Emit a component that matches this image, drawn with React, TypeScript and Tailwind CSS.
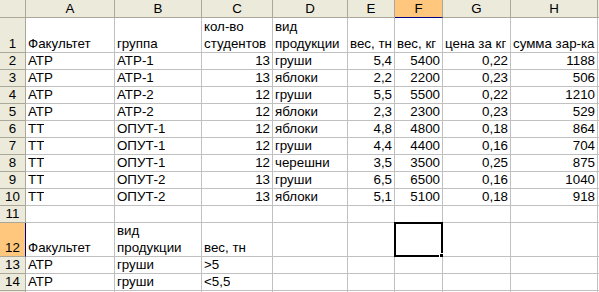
import React from "react";

type Cell = { v?: string; right?: boolean };

const cols = ["A", "B", "C", "D", "E", "F", "G", "H"];
const widths = [89, 87, 71, 75, 47, 48, 68, 87];

const t = (v: string): Cell => ({ v });
const n = (v: string): Cell => ({ v, right: true });
const e: Cell = {};

const rows: { h: number; cells: Cell[] }[] = [
  {
    h: 35,
    cells: [t("Факультет"), t("группа"), t("кол-во студентов"), t("вид продукции"), t("вес, тн"), t("вес, кг"), t("цена за кг"), t("сумма зар-ка")],
  },
  { h: 17, cells: [t("АТР"), t("АТР-1"), n("13"), t("груши"), n("5,4"), n("5400"), n("0,22"), n("1188")] },
  { h: 17, cells: [t("АТР"), t("АТР-1"), n("13"), t("яблоки"), n("2,2"), n("2200"), n("0,23"), n("506")] },
  { h: 17, cells: [t("АТР"), t("АТР-2"), n("12"), t("груши"), n("5,5"), n("5500"), n("0,22"), n("1210")] },
  { h: 17, cells: [t("АТР"), t("АТР-2"), n("12"), t("яблоки"), n("2,3"), n("2300"), n("0,23"), n("529")] },
  { h: 17, cells: [t("ТТ"), t("ОПУТ-1"), n("12"), t("яблоки"), n("4,8"), n("4800"), n("0,18"), n("864")] },
  { h: 17, cells: [t("ТТ"), t("ОПУТ-1"), n("12"), t("груши"), n("4,4"), n("4400"), n("0,16"), n("704")] },
  { h: 17, cells: [t("ТТ"), t("ОПУТ-1"), n("12"), t("черешни"), n("3,5"), n("3500"), n("0,25"), n("875")] },
  { h: 17, cells: [t("ТТ"), t("ОПУТ-2"), n("13"), t("груши"), n("6,5"), n("6500"), n("0,16"), n("1040")] },
  { h: 17, cells: [t("ТТ"), t("ОПУТ-2"), n("13"), t("яблоки"), n("5,1"), n("5100"), n("0,18"), n("918")] },
  { h: 17, cells: [e, e, e, e, e, e, e, e] },
  { h: 34, cells: [t("Факультет"), t("вид продукции"), t("вес, тн"), e, e, e, e, e] },
  { h: 17, cells: [t("АТР"), t("груши"), t(">5"), e, e, e, e, e] },
  { h: 17, cells: [t("АТР"), t("груши"), t("<5,5"), e, e, e, e, e] },
  { h: 17, cells: [e, e, e, e, e, e, e, e] },
];

const activeRow = 12;
const activeCol = 5;

export default function App() {
  return (
    <div
      className="w-[599px] h-[292px] overflow-hidden bg-white text-[13.33px] leading-[17px] text-black"
      style={{ fontFamily: '"Liberation Sans", Arial, sans-serif' }}
    >
      <div className="flex h-[18px]">
        <div className="w-[26px] shrink-0 bg-[#ebeadb] border-r border-b border-[#aca899]" />
        {cols.map((c, i) => (
          <div
            key={c}
            style={{ width: widths[i] }}
            className={
              i === activeCol
                ? "shrink-0 flex items-center justify-center bg-[#ffc77d] border-r border-[#aca899] border-b border-b-[#000080]"
                : "shrink-0 flex items-center justify-center bg-[#ebeadb] border-r border-b border-[#aca899]"
            }
          >
            {c}
          </div>
        ))}
        <div className="flex-1 bg-[#ebeadb] border-b border-[#aca899]" />
      </div>
      {rows.map((r, ri) => {
        const num = ri + 1;
        return (
          <div key={ri} className="flex" style={{ height: r.h }}>
            <div
              className={
                num === activeRow
                  ? "w-[26px] shrink-0 flex items-end justify-center bg-[#ffc77d] border-b border-[#aca899] border-r border-r-[#000080]"
                  : "w-[26px] shrink-0 flex items-end justify-center bg-[#ebeadb] border-r border-b border-[#aca899]"
              }
            >
              {num < 15 ? num : ""}
            </div>
            {r.cells.map((c, ci) => (
              <div
                key={ci}
                style={{ width: widths[ci] }}
                className={
                  "relative shrink-0 flex items-end border-r border-b border-[#c0c0c0] px-[2px] " +
                  (c.right ? "justify-end" : "justify-start")
                }
              >
                <span className="block overflow-hidden">{c.v}</span>
                {num === activeRow && ci === activeCol && (
                  <div className="absolute -left-[1px] -top-[1px] w-[49px] h-[35px] border-2 border-black">
                    <div className="absolute -right-[3px] -bottom-[3px] w-[5px] h-[5px] bg-black border border-white" />
                  </div>
                )}
              </div>
            ))}
            <div className="flex-1 border-b border-[#c0c0c0]" />
          </div>
        );
      })}
    </div>
  );
}
